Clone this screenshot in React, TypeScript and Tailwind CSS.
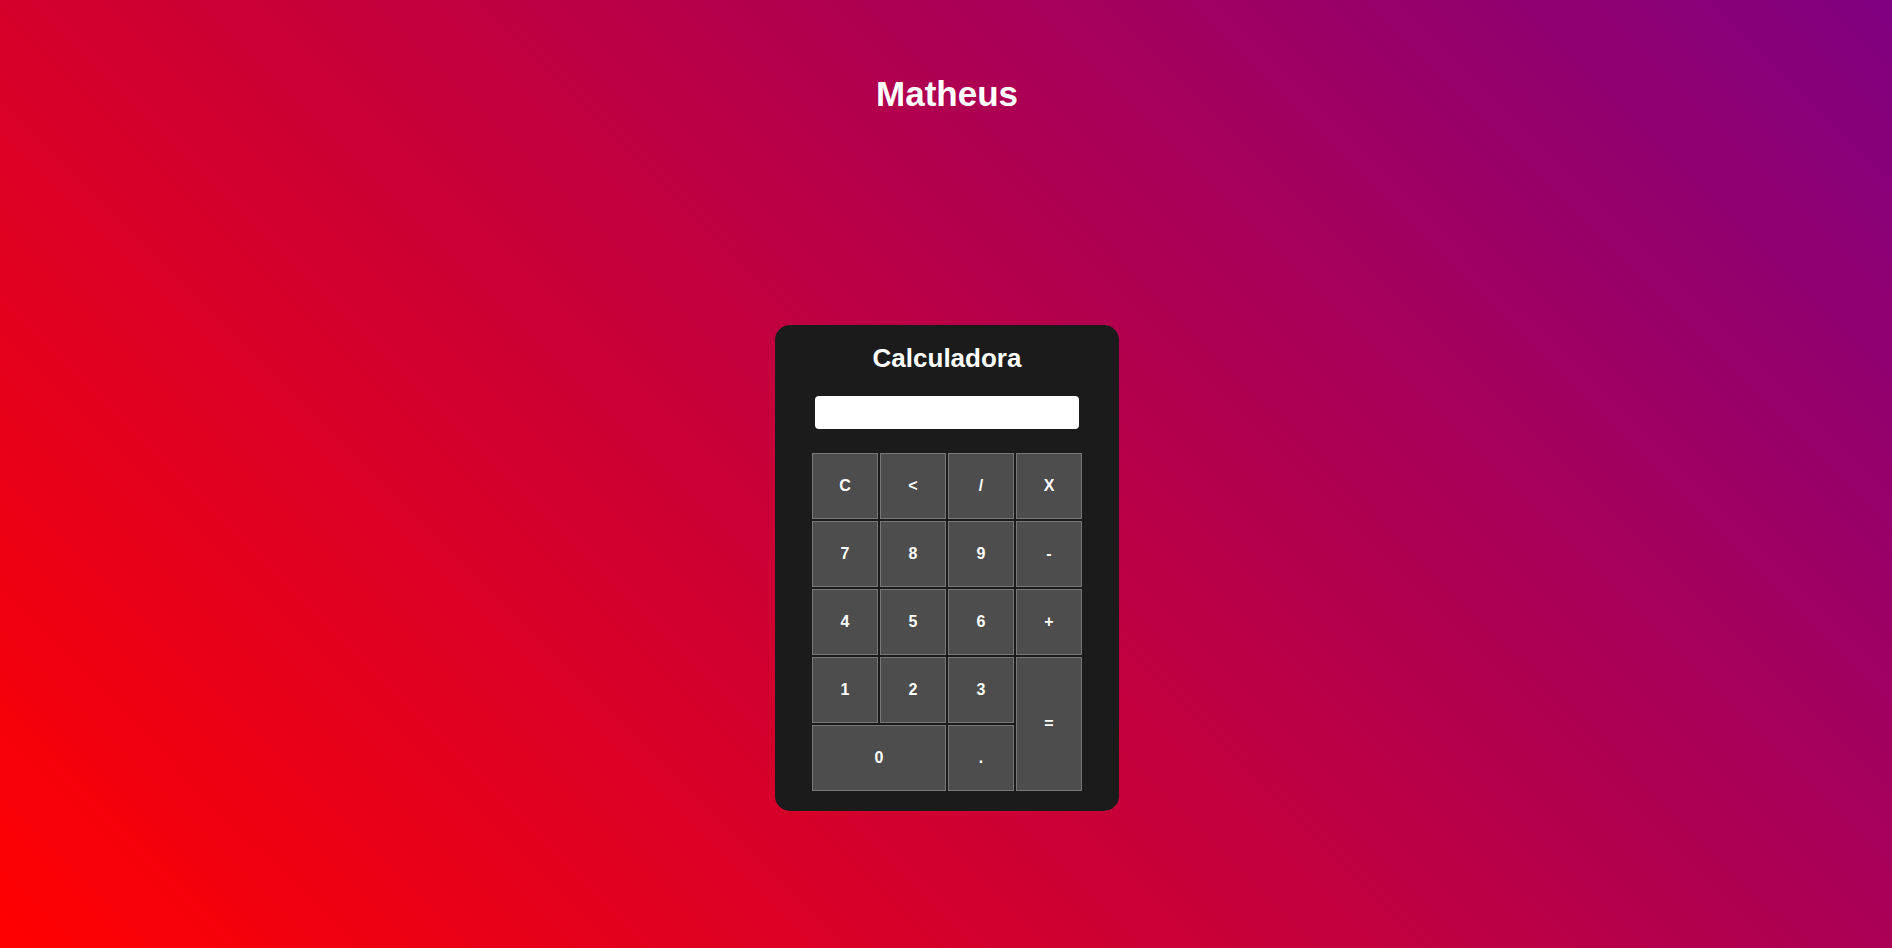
import React from "react";

const btn =
  "flex items-center justify-center bg-[#4d4d4d] border border-[#787878] text-white font-bold text-[16px] leading-none";

export default function App() {
  const keys: { k: string; cls?: string }[] = [
    { k: "C" },
    { k: "<" },
    { k: "/" },
    { k: "X" },
    { k: "7" },
    { k: "8" },
    { k: "9" },
    { k: "-" },
    { k: "4" },
    { k: "5" },
    { k: "6" },
    { k: "+" },
    { k: "1" },
    { k: "2" },
    { k: "3" },
    { k: "=", cls: "row-span-2" },
    { k: "0", cls: "col-span-2" },
    { k: "." },
  ];
  return (
    <div className="min-h-screen w-full bg-[linear-gradient(45deg,red,purple)] flex flex-col items-center font-['Liberation_Sans',Arial,sans-serif]">
      <h1 className="mt-[74px] ml-[2px] text-[35px] leading-[40px] font-bold text-white">Matheus</h1>
      <div className="mt-[211px] ml-[2px] w-[344px] h-[486px] rounded-[15px] bg-[#1b1b1b] pt-[18px] flex flex-col items-center">
        <h2 className="text-[26px] leading-[30px] font-bold text-white">Calculadora</h2>
        <input
          type="text"
          className="mt-[23px] w-[264px] h-[33px] rounded-[4px] bg-white outline-none border-0"
        />
        <div className="mt-[24px] grid grid-cols-[repeat(4,66px)] grid-rows-[repeat(5,66px)] gap-[2px]">
          {keys.map((b) => (
            <button key={b.k} className={`${btn} ${b.cls ?? ""}`}>
              {b.k}
            </button>
          ))}
        </div>
      </div>
    </div>
  );
}
